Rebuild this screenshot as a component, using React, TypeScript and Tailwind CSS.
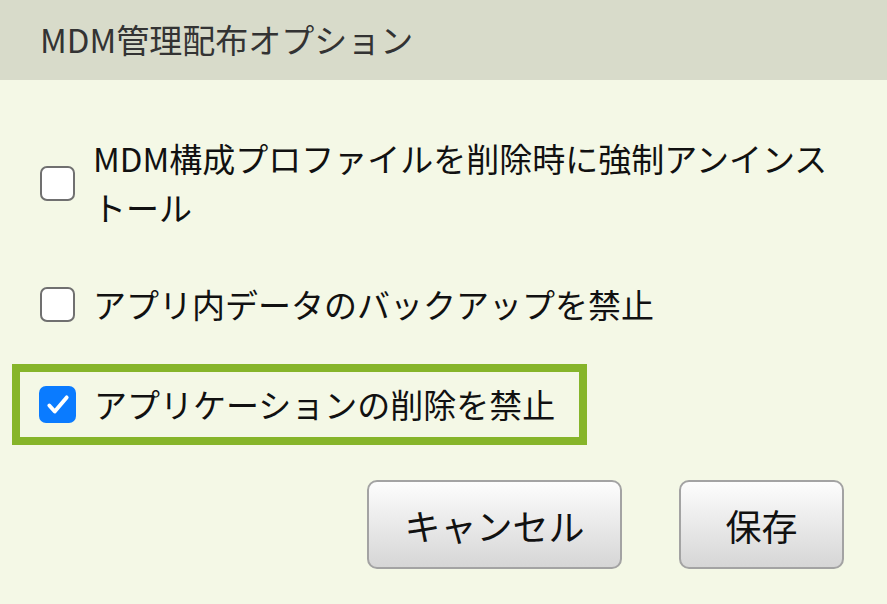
const font = { fontFamily: '"Noto Sans CJK JP", "Noto Sans", sans-serif' };

function Checkbox({ checked }: { checked: boolean }) {
  if (checked) {
    return (
      <span className="flex h-[37px] w-[37px] shrink-0 items-center justify-center rounded-[7px] bg-[#0a7bff]">
        <svg width="26" height="26" viewBox="0 0 24 24" fill="none">
          <path
            d="M4 12.5l5 5.5L20 5"
            stroke="#fff"
            strokeWidth="3.6"
            strokeLinecap="round"
            strokeLinejoin="round"
          />
        </svg>
      </span>
    );
  }
  return (
    <span className="h-[35px] w-[35px] shrink-0 rounded-[7px] border-2 border-[#707070] bg-white" />
  );
}

function Option({ label, checked = false }: { label: string; checked?: boolean }) {
  return (
    <label className="flex items-center gap-[18px]">
      <Checkbox checked={checked} />
      <span className="text-[33px] leading-[49px] text-[#111]">{label}</span>
    </label>
  );
}

export default function App() {
  return (
    <div style={font} className="flex h-[604px] w-[887px] flex-col bg-[#f4f8e6]">
      {/* Header */}
      <div className="flex h-[80px] shrink-0 items-center bg-[#d8dbca] pl-[40px] text-[33px] text-[#333]">
        MDM管理配布オプション
      </div>

      {/* Options */}
      <div className="flex flex-col pt-[54px] pr-[43px]">
        <div className="pl-[40px]">
          <Option label="MDM構成プロファイルを削除時に強制アンインストール" />
        </div>
        <div className="mt-[48px] pl-[40px]">
          <Option label="アプリ内データのバックアップを禁止" />
        </div>
        <div className="ml-[12px] mt-[35px] w-[575px] border-[8px] border-[#86b52a] py-[8px] pl-[19px]">
          <Option label="アプリケーションの削除を禁止" checked />
        </div>
      </div>

      {/* Buttons */}
      <div className="mt-[35px] flex justify-end gap-[57px] pr-[43px]">
        <button className="h-[89px] w-[255px] rounded-[10px] border-2 border-[#a3a3a3] bg-gradient-to-b from-[#fdfdfd] to-[#d6d6d6] text-[36px] text-[#111]">
          キャンセル
        </button>
        <button className="h-[89px] w-[165px] rounded-[10px] border-2 border-[#a3a3a3] bg-gradient-to-b from-[#fdfdfd] to-[#d6d6d6] text-[36px] text-[#111]">
          保存
        </button>
      </div>
    </div>
  );
}
